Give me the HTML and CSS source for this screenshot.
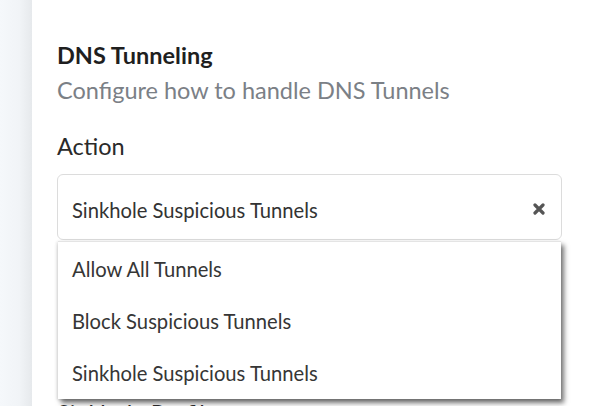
FILE: index.html
```html
<!DOCTYPE html>
<html>
<head>
<meta charset="utf-8">
<link rel="stylesheet" href="styles.css">
</head>
<body>
<div class="page">
  <aside class="sidebar"></aside>
  <main class="content">
    <h2 class="title">DNS Tunneling</h2>
    <p class="subtitle">Configure how to handle DNS Tunnels</p>
    <div class="field">
      <label class="label">Action</label>
      <div class="select-wrap">
        <div class="select">
          <span class="select-value">Sinkhole Suspicious Tunnels</span>
          <svg class="clear" width="12" height="12" viewBox="0 0 12 12"><path d="M2 2 L10 10 M10 2 L2 10" stroke="#555" stroke-width="3.2" stroke-linecap="round"/></svg>
        </div>
        <ul class="menu">
          <li class="option">Allow All Tunnels</li>
          <li class="option">Block Suspicious Tunnels</li>
          <li class="option">Sinkhole Suspicious Tunnels</li>
        </ul>
      </div>
    </div>
    <div class="field field-next">
      <label class="label">Sinkhole Profile</label>
    </div>
  </main>
</div>
</body>
</html>
```
FILE: styles.css
```css
html, body {
  margin: 0;
  padding: 0;
  background: #fff;
}
body {
  font-family: Lato, "Open Sans", sans-serif;
  color: #2a2a2a;
}
.page {
  display: flex;
  height: 406px;
  overflow: hidden;
}
.sidebar {
  width: 32px;
  flex: none;
  background: linear-gradient(to right, #f5f8fb 0%, #f1f4f7 60%, #e6e9ec 100%);
}
.content {
  flex: 1;
  padding: 41px 38px 0 25px;
}
.title {
  margin: 0;
  font-size: 23.5px;
  font-weight: 700;
  line-height: 28px;
  color: #1f1f1f;
}
.subtitle {
  margin: 7px 0 0;
  font-size: 23.5px;
  line-height: 28px;
  color: #7b8086;
}
.field {
  margin-top: 28px;
}
.field-next {
  margin-top: 159px;
}
.label {
  display: block;
  font-size: 23.5px;
  line-height: 28px;
  color: #2a2a2a;
}
.select-wrap {
  position: relative;
  margin-top: 14px;
}
.select {
  display: flex;
  align-items: center;
  justify-content: space-between;
  height: 64px;
  box-sizing: content-box;
  padding: 0 16px 0 14px;
  border: 1px solid #dcdcdc;
  border-radius: 6px;
  background: #fff;
}
.select-value {
  font-size: 20.2px;
  line-height: 24px;
  padding-top: 6px;
  color: #333;
}
.clear {
  display: block;
  margin-top: 3px;
}
.menu {
  position: absolute;
  left: 1px;
  right: 1px;
  top: 67px;
  margin: 0;
  padding: 1px 0 0;
  list-style: none;
  background: #fff;
  border-top: 1px solid #e4e4e4;
  box-shadow: 3px 4px 5px rgba(0, 0, 0, 0.55), -1px 1px 3px rgba(0, 0, 0, 0.15);
  z-index: 2;
}
.option {
  height: 52px;
  line-height: 52px;
  padding-left: 14px;
  font-size: 20.2px;
  color: #363636;
}
```
